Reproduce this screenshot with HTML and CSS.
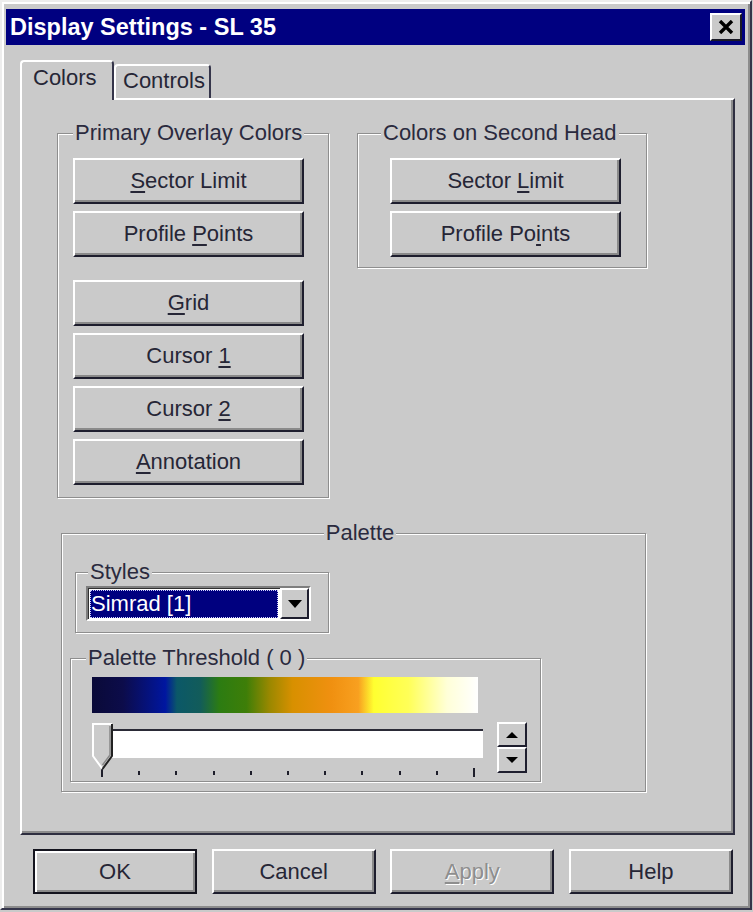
FILE: index.html
```html
<!DOCTYPE html>
<html>
<head>
<meta charset="utf-8">
<title>Display Settings - SL 35</title>
<link rel="stylesheet" href="styles.css">
</head>
<body>
<div class="window">
  <div class="titlebar">
    <span class="title">Display Settings - SL 35</span>
    <div class="close"><svg width="16" height="14" viewBox="0 0 16 14"><path d="M2 1L14 13M14 1L2 13" stroke="#000" stroke-width="3.4"/></svg></div>
  </div>
  <div class="tabs">
    <div class="tab active">Colors</div>
    <div class="tab">Controls</div>
  </div>
  <div class="panel">
    <div class="top-row">
      <div class="group primary">
        <div class="legend">Primary Overlay Colors</div>
        <div class="btn first"><span><u>S</u>ector Limit</span></div>
        <div class="btn"><span>Profile <u>P</u>oints</span></div>
        <div class="btn spaced"><span><u>G</u>rid</span></div>
        <div class="btn"><span>Cursor <u>1</u></span></div>
        <div class="btn"><span>Cursor <u>2</u></span></div>
        <div class="btn"><span><u>A</u>nnotation</span></div>
      </div>
      <div class="group second">
        <div class="legend">Colors on Second Head</div>
        <div class="btn first"><span>Sector <u>L</u>imit</span></div>
        <div class="btn"><span>Profile Po<u>i</u>nts</span></div>
      </div>
    </div>
    <div class="group palette">
      <div class="legend">Palette</div>
      <div class="group styles">
        <div class="legend">Styles</div>
        <div class="select">
          <div class="select-value"><span class="select-text">Simrad [1]</span></div>
          <div class="select-btn"><svg width="14" height="8" viewBox="0 0 14 8"><path d="M0 0H14L7 8Z" fill="#000"/></svg></div>
        </div>
      </div>
      <div class="group threshold">
        <div class="legend">Palette Threshold ( 0 )</div>
        <div class="colorbar"></div>
        <div class="slider-row">
          <div class="slider">
            <div class="track"></div>
            <div class="ticks">
              <i class="long"></i><i></i><i></i><i></i><i></i><i></i><i></i><i></i><i></i><i></i><i class="long"></i>
            </div>
            <svg class="thumb" width="22" height="48" viewBox="0 0 22 48">
              <polygon points="1,1 20,1 20,33 10.5,46 1,33" fill="#cbcbcb"/>
              <polyline points="10.5,46 1,33 1,1 20,1" stroke="#fff" stroke-width="2" fill="none"/>
              <polyline points="20,1 20,33 10.5,46" stroke="#222" stroke-width="2" fill="none"/>
              <polyline points="18,3 18,32 10.5,42" stroke="#888" stroke-width="1.5" fill="none"/>
            </svg>
          </div>
          <div class="spin">
            <div class="spin-btn up"><svg width="12" height="6" viewBox="0 0 12 6"><path d="M0 6H12L6 0Z" fill="#000"/></svg></div>
            <div class="spin-btn down"><svg width="12" height="6" viewBox="0 0 12 6"><path d="M0 0H12L6 6Z" fill="#000"/></svg></div>
          </div>
        </div>
      </div>
    </div>
  </div>
  <div class="footer">
    <div class="btn default"><span>OK</span></div>
    <div class="btn"><span>Cancel</span></div>
    <div class="btn disabled"><span><u>A</u>pply</span></div>
    <div class="btn"><span>Help</span></div>
  </div>
</div>
</body>
</html>
```

FILE: styles.css
```css
* { box-sizing: border-box; }
html, body { margin: 0; padding: 0; }
body {
  width: 753px;
  height: 912px;
  overflow: hidden;
  background: #cacaca;
  font-family: "Liberation Sans", Arial, sans-serif;
  font-size: 22px;
  color: #262636;
}

.window {
  width: 752px;
  border: 2px solid;
  border-color: #ededed #35354a #35354a #ededed;
  box-shadow: inset 2px 2px 0 #ffffff, inset -2px -2px 0 #8c8c8c;
  padding: 7px 5px 14px 4px;
  background: #cacaca;
}

.titlebar {
  height: 36px;
  background: #000080;
  display: flex;
  align-items: center;
  justify-content: space-between;
  padding: 0 3px 0 4px;
}
.title {
  color: #ffffff;
  font-weight: bold;
  font-size: 23.5px;
  line-height: 28px;
}
.close {
  width: 32px;
  height: 28px;
  background: #cacaca;
  border: 2px solid;
  border-color: #ffffff #1a1a26 #1a1a26 #ffffff;
  display: flex;
  align-items: center;
  justify-content: center;
}

.tabs {
  display: flex;
  align-items: flex-end;
  height: 38px;
  margin: 15px 0 0 14px;
}
.tab {
  background: #cacaca;
  border: 2px solid;
  border-bottom: 0;
  border-color: #ffffff #35354a transparent #ffffff;
  border-radius: 4px 4px 0 0;
  line-height: 24px;
}
.tab.active {
  width: 94px;
  height: 40px;
  margin-bottom: -2px;
  padding: 4px 0 0 11px;
  position: relative;
  z-index: 1;
}
.tab:not(.active) {
  width: 97px;
  height: 34px;
  padding: 3px 0 0 7px;
}

.panel {
  width: 715px;
  height: 737px;
  margin-left: 14px;
  border: 2px solid;
  border-color: #ffffff #2e2e40 #2e2e40 #ffffff;
  box-shadow: inset -2px -2px 0 #8c8c8c;
  padding: 33px 0 0 35px;
}

.top-row {
  display: flex;
  align-items: flex-start;
  gap: 28px;
}

.group {
  border: 1px solid #8e8e8e;
  box-shadow: inset 1px 1px 0 #ffffff, 1px 1px 0 #ffffff;
}
.legend {
  width: fit-content;
  margin-top: -13px;
  padding: 0 2px;
  line-height: 24px;
  background: #cacaca;
  color: #2a2a3e;
  white-space: nowrap;
}

.btn {
  height: 46px;
  display: flex;
  align-items: center;
  justify-content: center;
  background: #cacaca;
  border: 2px solid;
  border-color: #ffffff #1e1e2e #1e1e2e #ffffff;
  box-shadow: inset -2px -2px 0 #8a8a8a;
  white-space: nowrap;
}
.btn u { text-underline-offset: 3px; text-decoration-thickness: 2px; }

.primary {
  width: 272px;
  padding: 0 0 12px 15px;
}
.primary .btn, .second .btn {
  width: 231px;
  margin-top: 7px;
}
.primary .btn.first, .second .btn.first { margin-top: 13px; }
.primary .btn.spaced { margin-top: 23px; }

.second {
  width: 290px;
  padding: 0 0 10px 32px;
}
.second .legend { margin-left: -9px; }

.palette {
  width: 585px;
  margin: 35px 0 0 4px;
  padding: 0 0 9px 13px;
}
.palette > .legend { margin-left: auto; margin-right: auto; }

.styles {
  width: 254px;
  margin-top: 27px;
  padding: 0 0 11px 10px;
}
.styles .legend { margin-left: 2px; }

.select {
  display: flex;
  width: 225px;
  height: 35px;
  margin-top: 2px;
  border: 2px solid;
  border-color: #7e7e7e #ffffff #ffffff #7e7e7e;
  box-shadow: inset 1px 1px 0 #303030;
  background: #ffffff;
}
.select-value {
  flex: 1;
  margin: 2px 2px 1px 2px;
  background: #00007f;
  outline: 1px dotted #d0d0ff;
  outline-offset: -1px;
  display: flex;
  align-items: center;
  padding-left: 1px;
}
.select-text {
  color: #ffffff;
  line-height: 28px;
}
.select-btn {
  width: 29px;
  background: #cacaca;
  border: 2px solid;
  border-color: #ffffff #1e1e2e #1e1e2e #ffffff;
  display: flex;
  align-items: center;
  justify-content: center;
}

.threshold {
  width: 471px;
  margin: 25px 0 0 -5px;
  padding: 0 12px 3px 21px;
}
.threshold .legend { margin-left: -6px; }

.colorbar {
  width: 386px;
  height: 36px;
  margin-top: 7px;
  background: linear-gradient(to right,
    #0a0a38 0%, #0c0c4a 8%, #0016a0 19%, #0b5868 22%, #125c5a 28%,
    #2c7c12 33%, #3e7e08 40%, #9a8800 46%, #d89000 52%, #f09010 62%,
    #f8a020 69%, #ffff30 73%, #ffff58 82%, #ffffd8 92%, #ffffff 100%);
}

.slider-row {
  display: flex;
  gap: 12px;
  margin-top: 7px;
}
.slider {
  position: relative;
  width: 393px;
  height: 58px;
}
.track {
  width: 371px;
  height: 29px;
  margin: 9px 0 0 20px;
  background: #ffffff;
  border-top: 2px solid #2a2a36;
}
.ticks {
  width: 374px;
  height: 9px;
  margin: 10px 0 0 9px;
  display: flex;
  justify-content: space-between;
  align-items: center;
}
.ticks i {
  display: block;
  width: 2px;
  height: 4px;
  background: #1e1e2a;
}
.ticks i.long { height: 9px; }
.thumb {
  position: absolute;
  left: 0;
  top: 3px;
}

.spin {
  width: 30px;
  margin-top: 2px;
  display: flex;
  flex-direction: column;
}
.spin-btn {
  height: 25px;
  background: #cacaca;
  border: 2px solid;
  border-color: #ffffff #1e1e2e #1e1e2e #ffffff;
  display: flex;
  align-items: center;
  justify-content: center;
}
.spin-btn.down { height: 26px; }

.footer {
  display: flex;
  justify-content: space-between;
  width: 700px;
  margin: 14px 0 0 27px;
}
.footer .btn {
  width: 164px;
  height: 45px;
}
.footer .btn.default {
  border: 2px solid #14141e;
  box-shadow: inset 2px 2px 0 #ffffff, inset -2px -2px 0 #8a8a8a;
}
.footer .btn.disabled {
  color: #8e8e8e;
  text-shadow: 1px 1px 0 #ffffff;
}
```
